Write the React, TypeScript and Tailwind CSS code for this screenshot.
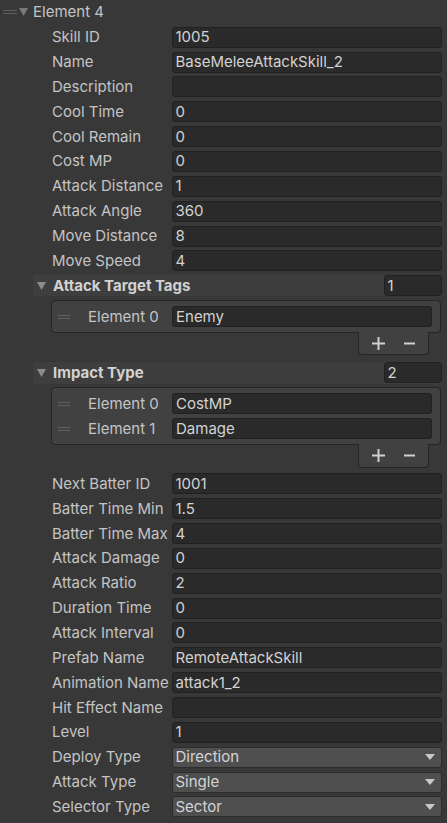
import React from "react";

const ROW = "h-[24.85px]";

function Field({ value }: { value: string }) {
  return (
    <div className="h-[21px] flex-1 rounded-[3px] border border-[#212121] bg-[#2a2a2a] pl-[3px] flex items-center text-[#d2d2d2] whitespace-nowrap overflow-hidden">
      {value}
    </div>
  );
}

function Dropdown({ value }: { value: string }) {
  return (
    <div className="h-[21px] flex-1 rounded-[3px] border border-[#2c2c2c] bg-[#4f4f4f] pl-[3px] pr-[6px] flex items-center justify-between text-[#d4d4d4]">
      <span>{value}</span>
      <svg width="10" height="6" viewBox="0 0 10 6">
        <path d="M0 0 L10 0 L5 6 Z" fill="#c8c8c8" />
      </svg>
    </div>
  );
}

function Row({ label, value, dropdown }: { label: string; value: string; dropdown?: boolean }) {
  return (
    <div className={`${ROW} flex items-center pl-[52px] pr-[5.5px]`}>
      <div className="w-[119.5px] shrink-0 whitespace-nowrap overflow-hidden text-[#c4c4c4]">{label}</div>
      {dropdown ? <Dropdown value={value} /> : <Field value={value} />}
    </div>
  );
}

function Tri({ color = "#8c8c8c" }: { color?: string }) {
  return (
    <svg width="9" height="8" viewBox="0 0 9 8">
      <path d="M0 0 L9 0 L4.5 8 Z" fill={color} />
    </svg>
  );
}

function Handle() {
  return (
    <div className="flex flex-col gap-[2px] w-[12px]">
      <div className="h-[1px] bg-[#5e5e5e]" />
      <div className="h-[1px] bg-[#5e5e5e]" />
    </div>
  );
}

function ArrayHeader({ label, count }: { label: string; count: string }) {
  return (
    <div className={`${ROW} flex items-center pl-[33px] pr-[5.5px]`}>
      <div className="h-[21.5px] flex-1 bg-[#3e3e3e] flex items-center">
        <div className="ml-[4px] mr-[7px] flex items-center">
          <Tri />
        </div>
        <span className="font-bold text-[#d2d2d2] flex-1">{label}</span>
        <div className="w-[58px] h-[21px] rounded-[3px] border border-[#212121] bg-[#2a2a2a] pl-[3px] flex items-center text-[#d2d2d2]">
          {count}
        </div>
      </div>
    </div>
  );
}

function ListBox({ items }: { items: string[] }) {
  return (
    <div className="ml-[51px] mr-[6px] mt-[2px]">
      <div className="rounded-[4px] border border-[#242424] bg-[#414141] py-[3px]">
        {items.map((v, i) => (
          <div key={i} className={`${ROW} flex items-center pl-[6px] pr-[8px]`}>
            <Handle />
            <div className="ml-[18px] w-[84px] shrink-0 text-[#c4c4c4] whitespace-nowrap">Element {i}</div>
            <Field value={v} />
          </div>
        ))}
      </div>
      <div className="relative -mt-[1px] ml-auto mr-[12px] w-[71px] h-[23.5px] rounded-b-[4px] border-x border-b border-[#242424] bg-[#414141] flex items-center justify-center gap-[19px]">
        <svg width="13" height="13" viewBox="0 0 13 13">
          <rect x="5.5" y="0" width="2" height="13" fill="#d0d0d0" />
          <rect x="0" y="5.5" width="13" height="2" fill="#d0d0d0" />
        </svg>
        <svg width="11" height="13" viewBox="0 0 11 13">
          <rect x="0" y="5.5" width="11" height="2" fill="#d0d0d0" />
        </svg>
      </div>
    </div>
  );
}

export default function App() {
  const top: [string, string][] = [
    ["Skill ID", "1005"],
    ["Name", "BaseMeleeAttackSkill_2"],
    ["Description", ""],
    ["Cool Time", "0"],
    ["Cool Remain", "0"],
    ["Cost MP", "0"],
    ["Attack Distance", "1"],
    ["Attack Angle", "360"],
    ["Move Distance", "8"],
    ["Move Speed", "4"],
  ];
  const bottom: [string, string][] = [
    ["Next Batter ID", "1001"],
    ["Batter Time Min", "1.5"],
    ["Batter Time Max", "4"],
    ["Attack Damage", "0"],
    ["Attack Ratio", "2"],
    ["Duration Time", "0"],
    ["Attack Interval", "0"],
    ["Prefab Name", "RemoteAttackSkill"],
    ["Animation Name", "attack1_2"],
    ["Hit Effect Name", ""],
    ["Level", "1"],
  ];
  return (
    <div className="w-[447px] h-[823px] overflow-hidden bg-[#383838] font-['Inter',sans-serif] text-[15px] leading-[18px]">
      <div className={`${ROW} flex items-center pl-[3px]`}>
        <div className="mr-[2px]">
          <div className="flex flex-col gap-[2px] w-[14px]">
            <div className="h-[1px] bg-[#5e5e5e]" />
            <div className="h-[1px] bg-[#5e5e5e]" />
          </div>
        </div>
        <div className="mr-[5px] flex items-center">
          <Tri color="#7a7a7a" />
        </div>
        <span className="text-[#c4c4c4]">Element 4</span>
      </div>
      {top.map(([l, v]) => (
        <Row key={l} label={l} value={v} />
      ))}
      <ArrayHeader label="Attack Target Tags" count="1" />
      <ListBox items={["Enemy"]} />
      <div className="mt-[5px]">
        <ArrayHeader label="Impact Type" count="2" />
      </div>
      <ListBox items={["CostMP", "Damage"]} />
      <div className="mt-[4px]">
        {bottom.map(([l, v]) => (
          <Row key={l} label={l} value={v} />
        ))}
        <Row label="Deploy Type" value="Direction" dropdown />
        <Row label="Attack Type" value="Single" dropdown />
        <Row label="Selector Type" value="Sector" dropdown />
      </div>
    </div>
  );
}
